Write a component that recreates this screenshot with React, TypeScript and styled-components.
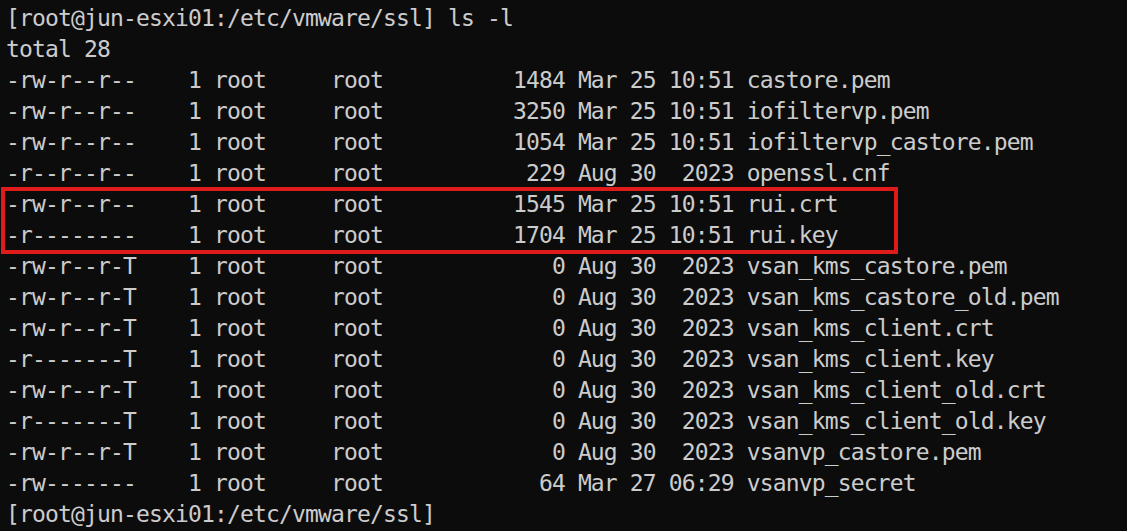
import React from "react";
import styled, { createGlobalStyle } from "styled-components";

const GlobalStyle = createGlobalStyle`
  html, body {
    margin: 0;
    padding: 0;
    background: #0c0c0c;
  }
  body {
    width: 1127px;
    height: 531px;
    overflow: hidden;
  }
`;

const Terminal = styled.div`
  display: flex;
  flex-direction: column;
  width: 1127px;
  height: 531px;
  box-sizing: border-box;
  padding: 3px 0 0 6px;
  background: #0c0c0c;
  color: #cccccc;
  font-family: "DejaVu Sans Mono", "Liberation Mono", monospace;
  font-size: 23px;
  letter-spacing: -0.85px;
  overflow: hidden;
`;

const Line = styled.div`
  height: 31px;
  line-height: 31px;
  white-space: pre;
`;

const Highlight = styled.div`
  position: relative;
  display: flex;
  flex-direction: column;

  &::after {
    content: "";
    position: absolute;
    left: -5px;
    top: -2px;
    width: 897px;
    height: 67px;
    box-sizing: border-box;
    border: 4px solid #e01b1b;
    pointer-events: none;
  }
`;

const before = [
  "[root@jun-esxi01:/etc/vmware/ssl] ls -l",
  "total 28",
  "-rw-r--r--    1 root     root          1484 Mar 25 10:51 castore.pem",
  "-rw-r--r--    1 root     root          3250 Mar 25 10:51 iofiltervp.pem",
  "-rw-r--r--    1 root     root          1054 Mar 25 10:51 iofiltervp_castore.pem",
  "-r--r--r--    1 root     root           229 Aug 30  2023 openssl.cnf",
];

const highlighted = [
  "-rw-r--r--    1 root     root          1545 Mar 25 10:51 rui.crt",
  "-r--------    1 root     root          1704 Mar 25 10:51 rui.key",
];

const after = [
  "-rw-r--r-T    1 root     root             0 Aug 30  2023 vsan_kms_castore.pem",
  "-rw-r--r-T    1 root     root             0 Aug 30  2023 vsan_kms_castore_old.pem",
  "-rw-r--r-T    1 root     root             0 Aug 30  2023 vsan_kms_client.crt",
  "-r-------T    1 root     root             0 Aug 30  2023 vsan_kms_client.key",
  "-rw-r--r-T    1 root     root             0 Aug 30  2023 vsan_kms_client_old.crt",
  "-r-------T    1 root     root             0 Aug 30  2023 vsan_kms_client_old.key",
  "-rw-r--r-T    1 root     root             0 Aug 30  2023 vsanvp_castore.pem",
  "-rw-------    1 root     root            64 Mar 27 06:29 vsanvp_secret",
  "[root@jun-esxi01:/etc/vmware/ssl]",
];

export default function App() {
  return (
    <>
      <GlobalStyle />
      <Terminal>
        {before.map((l, i) => (
          <Line key={"b" + i}>{l}</Line>
        ))}
        <Highlight>
          {highlighted.map((l, i) => (
            <Line key={"h" + i}>{l}</Line>
          ))}
        </Highlight>
        {after.map((l, i) => (
          <Line key={"a" + i}>{l}</Line>
        ))}
      </Terminal>
    </>
  );
}
